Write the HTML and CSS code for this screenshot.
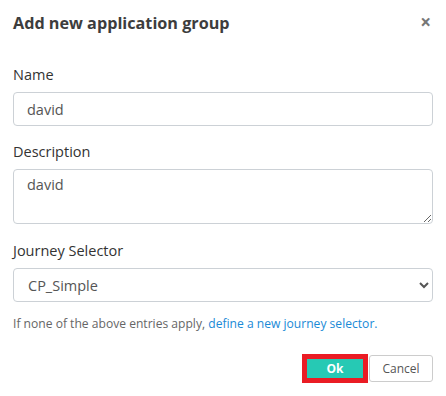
FILE: index.html
```html
<!DOCTYPE html>
<html lang="en">
<head>
    <meta charset="UTF-8">
    <meta name="viewport" content="width=device-width, initial-scale=1.0">
    <title>Add new application group</title>
    <link rel="stylesheet" href="styles.css">
</head>
<body>

<div class="modal">
    <div class="modal-header">
        <h1>Add new application group</h1>
        <button class="close-btn" aria-label="Close">&times;</button>
    </div>

    <div class="modal-body">
        <label for="name">Name</label>
        <input type="text" id="name" name="name" value="david">

        <label for="description">Description</label>
        <textarea id="description" name="description">david</textarea>

        <label for="journey">Journey Selector</label>
        <select id="journey" name="journey">
            <option value="cp-simple">CP_Simple</option>
        </select>

        <p class="hint">If none of the above entries apply, <a href="#">define a new journey selector.</a></p>
    </div>

    <div class="modal-footer">
        <button class="ok-btn">Ok</button>
        <button class="cancel-btn">Cancel</button>
    </div>
</div>

</body>
</html>
```

FILE: styles.css
```css
body {
    font-family: 'Open Sans', 'Liberation Sans', sans-serif;
    margin: 0;
    padding: 0;
    background-color: #fff;
    color: #333;
}

.modal {
    padding: 0 13px;
}

.modal-header {
    display: flex;
    align-items: center;
    justify-content: space-between;
    padding-top: 9px;
    height: 27px;
}

.modal-header h1 {
    margin: 0;
    font-size: 16.2px;
    font-weight: bold;
    color: #3d3d3d;
}

.close-btn {
    border: none;
    background: none;
    padding: 0 2px 0 0;
    font-family: 'Open Sans', sans-serif;
    font-size: 19px;
    font-weight: bold;
    color: #777;
    line-height: 1;
    cursor: pointer;
}

.modal-body {
    padding-top: 29px;
}

label {
    display: block;
    font-size: 14.5px;
    line-height: 20px;
    margin-bottom: 7px;
    color: #333;
}

input[type="text"],
textarea,
select {
    display: block;
    width: 100%;
    box-sizing: border-box;
    border: 1px solid #ccd1d6;
    border-radius: 4px;
    font-family: 'Open Sans', sans-serif;
    font-size: 14.5px;
    color: #555;
    background-color: #fff;
}

input[type="text"] {
    height: 34px;
    padding: 0 13px;
    margin-bottom: 16px;
}

textarea {
    height: 55px;
    padding: 5px 13px;
    resize: vertical;
    margin-bottom: 17px;
}

select {
    height: 34px;
    padding: 0 10px;
    margin-bottom: 13px;
}

.hint {
    margin: 0;
    font-size: 12.1px;
    color: #666;
}

.hint a {
    color: #1a8ad6;
    text-decoration: none;
}

.modal-footer {
    display: flex;
    justify-content: flex-end;
    gap: 1px;
    padding-top: 22px;
}

.ok-btn {
    background-color: #26c9b4;
    color: #fff;
    border: 5px solid #ea1c24;
    width: 66px;
    height: 29px;
    font-family: 'Open Sans', sans-serif;
    font-size: 12px;
    font-weight: bold;
    cursor: pointer;
}

.cancel-btn {
    background-color: #fff;
    color: #555;
    border: 1px solid #ccc;
    border-radius: 3px;
    width: 64px;
    height: 27px;
    margin-top: 1px;
    font-family: 'Open Sans', sans-serif;
    font-size: 12px;
    cursor: pointer;
}
```
